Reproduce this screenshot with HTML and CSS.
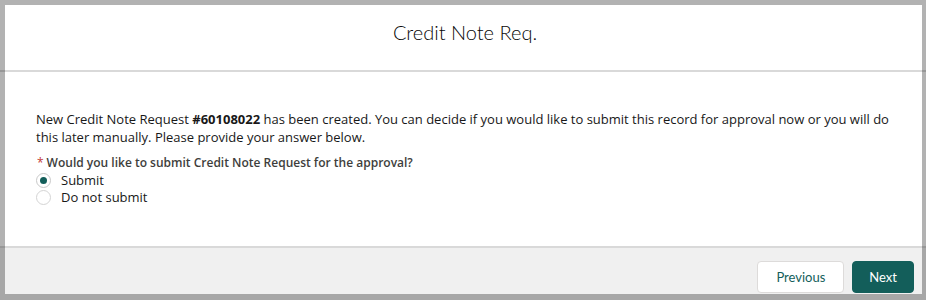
FILE: index.html
```html
<!DOCTYPE html>
<html lang="en">
<head>
<meta charset="utf-8">
<title>Credit Note Req.</title>
<link rel="stylesheet" href="styles.css">
</head>
<body>
<div class="page">
  <section class="modal">
    <header class="modal-header">
      <h1 class="modal-title">Credit Note Req.</h1>
    </header>
    <div class="modal-body">
      <p class="intro">New Credit Note Request <strong>#60108022</strong> has been created. You can decide if you would like to submit this record for approval now or you will do this later manually. Please provide your answer below.</p>
      <fieldset class="radio-group">
        <legend class="group-label"><abbr class="required" title="required">*</abbr>Would you like to submit Credit Note Request for the approval?</legend>
        <label class="radio">
          <input type="radio" name="submit" value="yes" checked>
          <span class="radio-faux"></span>
          <span class="radio-text">Submit</span>
        </label>
        <label class="radio">
          <input type="radio" name="submit" value="no">
          <span class="radio-faux"></span>
          <span class="radio-text">Do not submit</span>
        </label>
      </fieldset>
    </div>
    <footer class="modal-footer">
      <button class="btn btn-neutral" type="button">Previous</button>
      <button class="btn btn-brand" type="button">Next</button>
    </footer>
  </section>
</div>
</body>
</html>
```

FILE: styles.css
```css
* { box-sizing: border-box; }

html, body {
  margin: 0;
  padding: 0;
  background: #ffffff;
}

.page {
  position: relative;
  width: 926px;
  height: 300px;
  overflow: hidden;
}

/* translucent backdrop frame lying over the modal edges */
.page::after {
  content: "";
  position: absolute;
  inset: 0;
  border-style: solid;
  border-color: rgba(0, 0, 0, 0.3);
  border-width: 5px 4px 6px 5px;
  pointer-events: none;
}

.modal {
  display: flex;
  flex-direction: column;
  height: 100%;
  background: #ffffff;
  color: #181818;
  font-family: "Open Sans", "Noto Sans", sans-serif;
}

.modal-header {
  height: 72px;
  padding-top: 20px;
  border-bottom: 2px solid #d9d9d9;
  text-align: center;
}

.modal-title {
  margin: 0;
  padding-left: 4px;
  font-family: Lato, "Open Sans", sans-serif;
  font-weight: 300;
  font-size: 20px;
  line-height: 25px;
  color: #080707;
}

.modal-body {
  flex: 1;
  padding: 38px 35px 0 36px;
}

.intro {
  margin: 0;
  font-size: 13px;
  line-height: 18px;
}

.intro strong { font-weight: 700; }

.radio-group {
  margin: 8px 0 0;
  padding: 0;
  border: 0;
  min-width: 0;
}

.group-label {
  padding: 0;
  font-size: 12px;
  font-weight: 600;
  line-height: 18px;
  color: #3e3e3c;
}

.required {
  color: #c23934;
  text-decoration: none;
  border: 0;
  margin: 0 3px 0 1px;
  font-weight: 400;
}

.radio {
  display: flex;
  align-items: center;
  height: 17px;
  font-size: 13px;
  line-height: 17px;
  cursor: pointer;
}

.radio input {
  position: absolute;
  opacity: 0;
  width: 1px;
  height: 1px;
  margin: 0;
}

.radio-faux {
  display: flex;
  align-items: center;
  justify-content: center;
  width: 15px;
  height: 15px;
  margin-right: 10px;
  border: 1px solid #d4d4d4;
  border-radius: 50%;
  background: #ffffff;
}

.radio input:checked + .radio-faux {
  border-color: #c9c9c9;
}

.radio input:checked + .radio-faux::before {
  content: "";
  width: 7px;
  height: 7px;
  border-radius: 50%;
  background: #135e5a;
}

.modal-footer {
  display: flex;
  justify-content: flex-end;
  gap: 8px;
  height: 54px;
  padding: 13px 12px 0;
  border-top: 2px solid #d9d9d9;
  background: #f0f0f0;
}

.btn {
  height: 32px;
  padding: 0 16px;
  border-radius: 4px;
  font-family: Lato, "Open Sans", sans-serif;
  font-size: 13px;
  line-height: 30px;
  cursor: pointer;
}

.btn-neutral {
  padding: 0 18px;
  background: #ffffff;
  border: 1px solid #dddbda;
  color: #135e5a;
}

.btn-brand {
  background: #135e5a;
  border: 1px solid #135e5a;
  color: #ffffff;
}
```
